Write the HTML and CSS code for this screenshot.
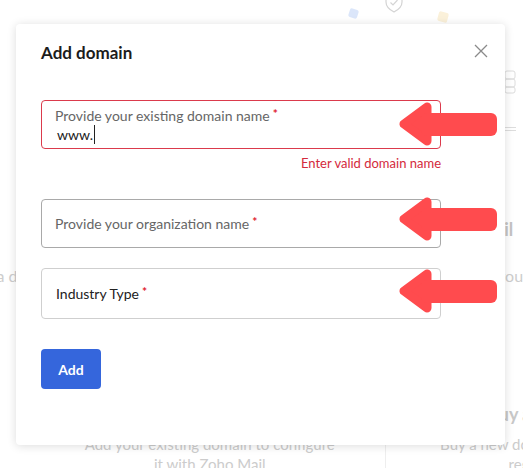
FILE: index.html
```html
<!DOCTYPE html>
<html lang="en">
<head>
    <meta charset="UTF-8">
    <meta name="viewport" content="width=device-width, initial-scale=1.0">
    <title>Add domain</title>
    <link rel="stylesheet" href="styles.css">
</head>
<body>
    <div class="page">
        <div class="hero-art">
            <span class="chip chip-blue"></span>
            <svg class="shield" width="20" height="20" viewBox="0 0 20 20">
                <path d="M10 1 L18 4 V9 C18 14 14 17 10 19 C6 17 2 14 2 9 V4 Z" fill="none" stroke="#d4d4d4" stroke-width="1.2"/>
                <path d="M6.5 9.5 L9 12 L13.5 7" fill="none" stroke="#d4d4d4" stroke-width="1.2"/>
            </svg>
            <span class="chip chip-yellow"></span>
            <svg class="stack" width="12" height="24" viewBox="0 0 12 24">
                <rect x="1" y="1" width="10" height="8" rx="2" fill="none" stroke="#dcdcdc"/>
                <rect x="1" y="9" width="10" height="8" rx="2" fill="none" stroke="#dcdcdc"/>
                <rect x="1" y="17" width="10" height="6" rx="2" fill="none" stroke="#dcdcdc"/>
            </svg>
            <span class="dash"></span>
        </div>

        <h1 class="page-title">Add a domain to your Zoho Mail</h1>
        <div class="page-sub">
            <span>You can add a domain that you already own, or buy a new one, and create emails for your organization and team members in a few clicks.</span>
        </div>

        <div class="options">
            <div class="option">
                <h3>Add existing domain</h3>
                <p>Add your existing domain to configure<br>it with Zoho Mail</p>
            </div>
            <div class="option">
                <h3>Buy a new domain</h3>
                <p>Buy a new domain from our partners<br>register it today</p>
            </div>
        </div>
    </div>

    <div class="modal">
        <h2 class="modal-title">Add domain</h2>
        <button class="close-btn" aria-label="Close">
            <svg width="14" height="14" viewBox="0 0 14 14">
                <path d="M1 1 L13 13 M13 1 L1 13" stroke="#8a8a8a" stroke-width="1.3" fill="none"/>
            </svg>
        </button>

        <form class="domain-form">
            <div class="field">
                <div class="field-box filled error">
                    <div class="field-label">Provide your existing domain name<span class="req">*</span></div>
                    <div class="field-value"><span class="typed">www.</span></div>
                </div>
                <div class="field-error">Enter valid domain name</div>
            </div>

            <div class="field">
                <div class="field-box">
                    <div class="field-label">Provide your organization name<span class="req">*</span></div>
                </div>
            </div>

            <div class="field">
                <div class="field-box select">
                    <div class="field-label">Industry Type<span class="req">*</span></div>
                </div>
            </div>

            <button type="submit" class="add-btn">Add</button>
        </form>
    </div>

    <!-- callout arrows drawn over the dialog -->
    <svg class="arrow arrow-1" width="100" height="44" viewBox="0 0 100 44">
        <polygon points="5,22 28,5 28,39" fill="#ff4b4e" stroke="#ff4b4e" stroke-width="9" stroke-linejoin="round"/>
        <rect x="22" y="11" width="76" height="23" rx="6" fill="#ff4b4e"/>
    </svg>
    <svg class="arrow arrow-2" width="100" height="44" viewBox="0 0 100 44">
        <polygon points="5,22 28,5 28,39" fill="#ff4b4e" stroke="#ff4b4e" stroke-width="9" stroke-linejoin="round"/>
        <rect x="22" y="11" width="76" height="23" rx="6" fill="#ff4b4e"/>
    </svg>
    <svg class="arrow arrow-3" width="100" height="44" viewBox="0 0 100 44">
        <polygon points="5,22 28,5 28,39" fill="#ff4b4e" stroke="#ff4b4e" stroke-width="9" stroke-linejoin="round"/>
        <rect x="22" y="11" width="76" height="23" rx="6" fill="#ff4b4e"/>
    </svg>
</body>
</html>
```

FILE: styles.css
```css
* {
    margin: 0;
    padding: 0;
    box-sizing: border-box;
    font-family: Lato, "Open Sans", sans-serif;
}

body {
    background: #fff;
    overflow: hidden;
    height: 468px;
    position: relative;
}

/* background page (dimmed) */
.page {
    width: 770px;
    position: relative;
}

.hero-art {
    height: 217px;
    position: relative;
}

.chip {
    position: absolute;
    border-radius: 2px;
}

.chip-blue {
    left: 349px;
    top: 9px;
    width: 9px;
    height: 9px;
    background: #dbe6fa;
    transform: rotate(18deg);
}

.chip-yellow {
    left: 438px;
    top: 12px;
    width: 10px;
    height: 10px;
    background: #fbf1da;
    transform: rotate(15deg);
}

.shield {
    position: absolute;
    left: 384px;
    top: -7px;
}

.stack {
    position: absolute;
    left: 504px;
    top: 70px;
}

.dash {
    position: absolute;
    left: 505px;
    top: 127px;
    width: 11px;
    height: 4px;
    border-top: 1px solid #ddd;
    border-bottom: 1px solid #ddd;
}

.page-title {
    text-align: center;
    font-size: 18px;
    line-height: 24px;
    font-weight: 700;
    color: #c4c4c4;
}

.page-sub {
    display: flex;
    justify-content: center;
    margin-top: 24px;
    font-size: 16px;
    line-height: 22px;
    color: #cdcdcd;
    white-space: nowrap;
}

.options {
    display: flex;
    width: 700px;
    margin: 116px 0 0 35px;
}

.option {
    flex: 1;
    text-align: center;
    padding: 0 20px;
}

.option + .option {
    border-left: 1px solid #eee;
}

.option h3 {
    font-size: 18px;
    line-height: 22px;
    font-weight: 700;
    color: #c8c8c8;
    white-space: nowrap;
}

.option p {
    margin-top: 9px;
    font-size: 15px;
    line-height: 20px;
    color: #cccccc;
    white-space: nowrap;
}

/* dialog */
.modal {
    position: absolute;
    left: 16px;
    top: 24px;
    width: 489px;
    height: 421px;
    background: #fff;
    border-radius: 4px;
    box-shadow: 0 1px 10px rgba(0,0,0,0.14);
    padding: 19px 25px;
}

.modal-title {
    font-size: 17px;
    line-height: 20px;
    font-weight: 700;
    color: #1c1c1c;
}

.close-btn {
    position: absolute;
    right: 17px;
    top: 20px;
    background: none;
    border: none;
    width: 14px;
    height: 14px;
    cursor: pointer;
}

.close-btn svg {
    display: block;
}

.domain-form {
    width: 400px;
    margin-top: 37px;
}

.field {
    margin-bottom: 20px;
}

.field-box {
    height: 49px;
    border: 1px solid #a9a9a9;
    border-radius: 4px;
    padding: 0 13px;
    display: flex;
    flex-direction: column;
    justify-content: center;
}

.field-box.filled {
    justify-content: flex-start;
    padding-top: 6px;
}

.field-box.error {
    border-color: #db3a4c;
}

.field-box.select {
    height: 51px;
    border-color: #cfcfcf;
}

.field-label {
    font-size: 14px;
    line-height: 17px;
    color: #666;
}

.select .field-label {
    color: #222;
    padding-left: 1px;
}

.req {
    color: #e0202e;
    font-size: 12px;
    font-weight: 700;
    margin-left: 3px;
    position: relative;
    top: -3px;
}

.field-value {
    font-size: 14px;
    line-height: 17px;
    color: #222;
    padding-left: 2px;
}

.typed {
    display: inline-block;
    border-right: 1px solid #222;
    padding-right: 1px;
    line-height: 19px;
}

.field-error {
    text-align: right;
    font-size: 13px;
    line-height: 16px;
    padding-top: 6px;
    height: 30px;
    color: #d42a3c;
}

.add-btn {
    margin-top: 10px;
    width: 60px;
    height: 40px;
    background-color: #3566dc;
    color: white;
    border: none;
    border-radius: 4px;
    font-size: 14px;
    font-weight: 700;
    cursor: pointer;
}

.arrow {
    position: absolute;
    left: 399px;
}

.arrow-1 { top: 102px; }
.arrow-2 { top: 197px; }
.arrow-3 { top: 269px; }
```
